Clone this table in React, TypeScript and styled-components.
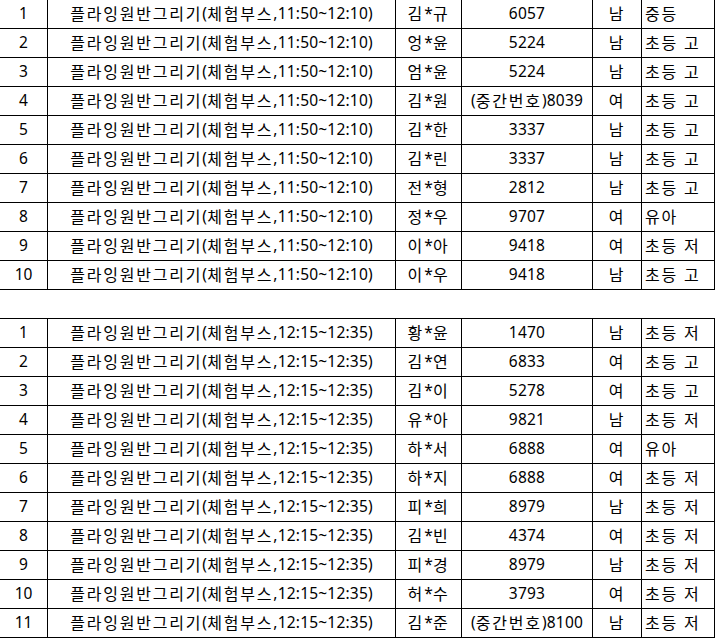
import React from "react";
import styled, { createGlobalStyle } from "styled-components";

const GlobalStyle = createGlobalStyle`
  html, body {
    margin: 0;
    padding: 0;
    background: #fff;
  }
  body {
    font-family: "Noto Sans", "Noto Sans CJK KR", sans-serif;
    color: #000;
  }
`;

const Page = styled.div`
  width: 717px;
  height: 640px;
  overflow: hidden;
  display: flex;
  flex-direction: column;
`;

const Table = styled.div<{ $topBorder?: boolean }>`
  width: 715px;
  display: flex;
  flex-direction: column;
  border-top: ${(p) => (p.$topBorder ? "1px solid #000" : "none")};
`;

const Spacer = styled.div`
  height: 28px;
`;

const Row = styled.div`
  display: grid;
  grid-template-columns: 48px 348px 66px 131px 49px 73px;
  height: 29px;
`;

const Cell = styled.div<{ $align?: "center" | "left" }>`
  box-sizing: border-box;
  height: 29px;
  border-right: 1px solid #000;
  border-bottom: 1px solid #000;
  display: flex;
  align-items: center;
  justify-content: ${(p) => (p.$align === "left" ? "flex-start" : "center")};
  padding-left: ${(p) => (p.$align === "left" ? "3px" : "0")};
  font-size: 15.5px;
  line-height: 1;
  white-space: pre;
  overflow: hidden;
`;

const Latin = styled.span`
  letter-spacing: 0.2px;
`;

// Hangul in the original font runs wider than Noto's, so open it up a bit
const Hangul = styled.span`
  font-size: 16px;
  letter-spacing: 1.8px;
`;

const Text: React.FC<{ value: string }> = ({ value }) => {
  const parts = value.match(/[\uac00-\ud7a3 ]+|[^\uac00-\ud7a3 ]+/g) ?? [];
  return (
    <>
      {parts.map((p, i) =>
        /[\uac00-\ud7a3]/.test(p) ? <Hangul key={i}>{p}</Hangul> : <Latin key={i}>{p}</Latin>
      )}
    </>
  );
};

type Entry = [string, string, string, string];

const first: Entry[] = [
  ["김*규", "6057", "남", "중등"],
  ["엉*윤", "5224", "남", "초등 고"],
  ["엄*윤", "5224", "남", "초등 고"],
  ["김*원", "(중간번호)8039", "여", "초등 고"],
  ["김*한", "3337", "남", "초등 고"],
  ["김*린", "3337", "남", "초등 고"],
  ["전*형", "2812", "남", "초등 고"],
  ["정*우", "9707", "여", "유아"],
  ["이*아", "9418", "여", "초등 저"],
  ["이*우", "9418", "남", "초등 고"],
];

const second: Entry[] = [
  ["황*윤", "1470", "남", "초등 저"],
  ["김*연", "6833", "여", "초등 고"],
  ["김*이", "5278", "여", "초등 고"],
  ["유*아", "9821", "남", "초등 저"],
  ["하*서", "6888", "여", "유아"],
  ["하*지", "6888", "여", "초등 저"],
  ["피*희", "8979", "남", "초등 저"],
  ["김*빈", "4374", "여", "초등 저"],
  ["피*경", "8979", "남", "초등 저"],
  ["허*수", "3793", "여", "초등 저"],
  ["김*준", "(중간번호)8100", "남", "초등 저"],
];

const Session: React.FC<{ time: string; rows: Entry[]; topBorder?: boolean }> = ({
  time,
  rows,
  topBorder,
}) => (
  <Table $topBorder={topBorder}>
    {rows.map(([name, num, sex, grade], i) => (
      <Row key={i}>
        <Cell>{i + 1}</Cell>
        <Cell>
          <Text value={`플라잉원반그리기(체험부스,${time})`} />
        </Cell>
        <Cell>
          <Text value={name} />
        </Cell>
        <Cell>
          <Text value={num} />
        </Cell>
        <Cell>
          <Text value={sex} />
        </Cell>
        <Cell $align="left">
          <Text value={grade} />
        </Cell>
      </Row>
    ))}
  </Table>
);

export default function App() {
  return (
    <>
      <GlobalStyle />
      <Page>
        <Session time="11:50~12:10" rows={first} />
        <Spacer />
        <Session time="12:15~12:35" rows={second} topBorder />
      </Page>
    </>
  );
}
